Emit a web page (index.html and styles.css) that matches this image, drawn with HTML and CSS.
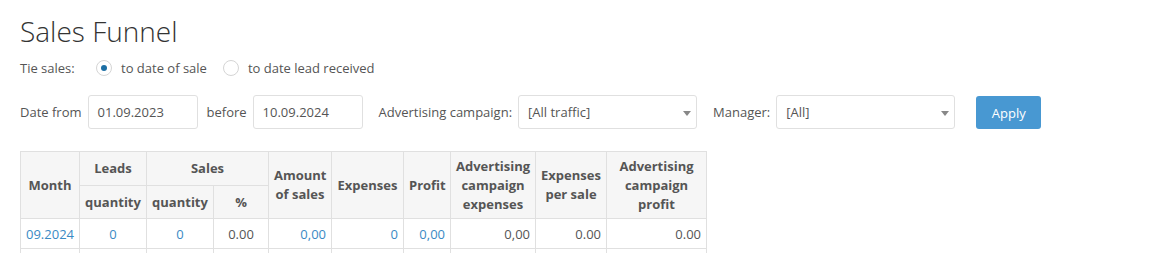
FILE: index.html
```html
<!DOCTYPE html>
<html lang="en">
  <head>
    <meta charset="UTF-8" />
    <title>Sales Funnel</title>
    <link rel="stylesheet" href="styles.css">
  </head>
  <body>
    <div class="page">
      <h1>Sales Funnel</h1>

      <div class="tie-row">
        <span class="tie-label">Tie sales:</span>
        <label class="radio"><span class="dot checked"></span>to date of sale</label>
        <label class="radio"><span class="dot"></span>to date lead received</label>
      </div>

      <div class="filters">
        <span class="flabel">Date from</span>
        <div class="input date">01.09.2023</div>
        <span class="flabel">before</span>
        <div class="input date">10.09.2024</div>
        <span class="flabel gap">Advertising campaign:</span>
        <div class="input select">[All traffic]<span class="caret"></span></div>
        <span class="flabel gap">Manager:</span>
        <div class="input select">[All]<span class="caret"></span></div>
        <button class="apply">Apply</button>
      </div>

      <table class="funnel">
        <colgroup>
          <col style="width: 59px" />
          <col style="width: 67px" />
          <col style="width: 67px" />
          <col style="width: 55px" />
          <col style="width: 63px" />
          <col style="width: 72px" />
          <col style="width: 47px" />
          <col style="width: 85px" />
          <col style="width: 71px" />
          <col style="width: 100px" />
        </colgroup>
        <thead>
          <tr class="h1">
            <th rowspan="2">Month</th>
            <th>Leads</th>
            <th colspan="2">Sales</th>
            <th rowspan="2">Amount of sales</th>
            <th rowspan="2">Expenses</th>
            <th rowspan="2">Profit</th>
            <th rowspan="2">Advertising campaign expenses</th>
            <th rowspan="2">Expenses per sale</th>
            <th rowspan="2">Advertising campaign profit</th>
          </tr>
          <tr class="h2">
            <th>quantity</th>
            <th>quantity</th>
            <th>%</th>
          </tr>
        </thead>
        <tbody>
          <tr>
            <td class="left link">09.2024</td>
            <td class="center link">0</td>
            <td class="center link">0</td>
            <td class="center">0.00</td>
            <td class="link">0,00</td>
            <td class="link">0</td>
            <td class="link">0,00</td>
            <td>0,00</td>
            <td>0.00</td>
            <td>0.00</td>
          </tr>
          <tr>
            <td></td>
            <td></td>
            <td></td>
            <td></td>
            <td></td>
            <td></td>
            <td></td>
            <td></td>
            <td></td>
            <td></td>
          </tr>
        </tbody>
      </table>
    </div>
  </body>
</html>
```

FILE: styles.css
```css
body {
  margin: 0;
  font-family: "Open Sans", Arial, sans-serif;
  font-size: 13px;
  color: #555;
  background-color: #fff;
}
.page {
  padding: 0 20px;
}
h1 {
  margin: 0;
  padding-top: 11px;
  font-size: 28px;
  font-weight: 300;
  line-height: 40px;
  color: #333;
}
.tie-row {
  display: flex;
  align-items: center;
  height: 20px;
  margin-top: 7px;
}
.tie-label {
  width: 76px;
}
.radio {
  display: flex;
  align-items: center;
  margin-right: 16px;
}
.dot {
  width: 16px;
  height: 16px;
  border: 1px solid #d5d5d5;
  border-radius: 50%;
  box-sizing: border-box;
  margin-right: 9px;
  position: relative;
}
.dot.checked::after {
  content: "";
  position: absolute;
  left: 4px;
  top: 4px;
  width: 6px;
  height: 6px;
  border-radius: 50%;
  background-color: #1c6ea4;
}
.filters {
  display: flex;
  align-items: center;
  margin-top: 17px;
}
.flabel {
  margin-right: 6px;
}
.flabel.gap {
  margin-left: 7px;
}
.input {
  height: 34px;
  box-sizing: border-box;
  border: 1px solid #e0e0e0;
  border-radius: 3px;
  padding: 0 9px;
  display: flex;
  align-items: center;
  margin-right: 9px;
  position: relative;
}
.input.date {
  width: 110px;
}
.input.select {
  width: 179px;
}
.caret {
  position: absolute;
  right: 5px;
  top: 15px;
  border-left: 4px solid transparent;
  border-right: 4px solid transparent;
  border-top: 5px solid #888;
}
.apply {
  margin-left: 12px;
  width: 65px;
  height: 33px;
  border: none;
  border-radius: 3px;
  background-color: #4898d2;
  color: #fff;
  font-family: "Open Sans", Arial, sans-serif;
  font-size: 13px;
  margin-top: 1px;
}
.funnel {
  margin-top: 22px;
  border-collapse: collapse;
  table-layout: fixed;
  width: 686px;
}
.funnel th,
.funnel td {
  border: 1px solid #e0e0e0;
  padding: 0 5px;
}
.funnel th {
  background-color: #f6f6f6;
  font-weight: bold;
  text-align: center;
  line-height: 19px;
  color: #555;
}
.funnel tr.h1 {
  height: 34px;
}
.funnel tr.h2 {
  height: 33px;
}
.funnel td {
  height: 29px;
  text-align: right;
}
.funnel td.left {
  text-align: left;
}
.funnel td.center {
  text-align: center;
}
.funnel td.link {
  color: #3a8ac4;
}
```
